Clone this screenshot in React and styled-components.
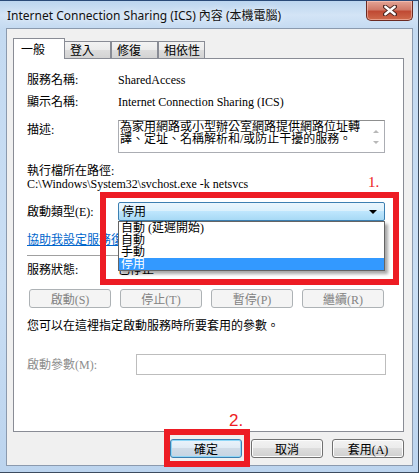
import React from 'react';
import styled, { createGlobalStyle } from 'styled-components';

const UI_FONT = `"Liberation Serif", "Noto Sans CJK TC", serif`;
const RED = '#ed1c24';

const GlobalStyle = createGlobalStyle`
  body {
    margin: 0;
    background: #ffffff;
  }
`;

const Window = styled.div`
  position: relative;
  width: 419px;
  height: 473px;
  box-sizing: border-box;
  border-top: 1px solid #2a4a78;
  border-right: 1px solid #3c4b5e;
  border-bottom: 1px solid #3c4b5e;
  background: linear-gradient(180deg, #bcd5ef 0px, #d3e4f6 14px, #c4daf1 28px, #c9def4 60%, #bcd4ee 100%);
  display: flex;
  flex-direction: column;
  font-family: ${UI_FONT};
  font-size: 12px;
  color: #000;
`;

const TitleBar = styled.div`
  height: 27px;
  display: flex;
  align-items: flex-start;
`;

const Title = styled.div`
  padding: 7px 0 0 7px;
  font-family: "Noto Sans", "Noto Sans CJK TC", sans-serif;
  font-size: 12px;
  line-height: 16px;
  color: #111;
  text-shadow: 0 0 6px rgba(255, 255, 255, 0.9);
`;

const CloseButton = styled.div`
  margin-left: auto;
  margin-right: 5px;
  width: 47px;
  height: 20px;
  box-sizing: border-box;
  border: 1px solid #6b2a22;
  border-top: none;
  border-radius: 0 0 5px 5px;
  background: linear-gradient(180deg, #e3a496 0%, #d07a69 45%, #c04a34 55%, #cf6a4c 100%);
  box-shadow: inset 0 0 0 1px rgba(255, 210, 200, 0.5);
  display: flex;
  align-items: center;
  justify-content: center;
`;

const Client = styled.div`
  margin: 0 5px 6px 6px;
  height: 438px;
  box-sizing: border-box;
  border: 1px solid #8b9aae;
  background: #f0f0f0;
  padding: 9px 8px 0 6px;
  display: flex;
  flex-direction: column;
`;

const TabStrip = styled.div`
  height: 20px;
  display: flex;
  align-items: flex-end;
  position: relative;
  z-index: 1;
`;

const Tab = styled.div`
  box-sizing: border-box;
  height: ${p => (p.$active ? 21 : 17)}px;
  min-width: ${p => (p.$active ? 52 : 47)}px;
  margin-bottom: ${p => (p.$active ? -1 : 0)}px;
  margin-right: ${p => (p.$active ? -1 : 0)}px;
  position: relative;
  z-index: ${p => (p.$active ? 2 : 1)};
  padding: ${p => (p.$active ? '4px 0 0 7px' : '2px 0 0 5px')};
  border: 1px solid #898c95;
  border-bottom: none;
  background: ${p =>
    p.$active ? '#ffffff' : 'linear-gradient(180deg, #f3f3f3 0%, #ebebeb 50%, #dddddd 50%, #d3d3d3 100%)'};
  line-height: 14px;
  font-size: 12px;
`;

const Panel = styled.div`
  height: 374px;
  box-sizing: border-box;
  border: 1px solid #898c95;
  background: #ffffff;
  padding-left: 13px;
  display: flex;
  flex-direction: column;
`;

const Row = styled.div`
  display: flex;
  align-items: ${p => p.$align || 'center'};
  height: ${p => p.$h}px;
  margin-top: ${p => p.$mt}px;
  line-height: 14px;
  flex-shrink: 0;
`;

const Label = styled.div`
  width: ${p => p.$w || 91}px;
  flex-shrink: 0;
  padding-top: ${p => p.$pt || 0}px;
  color: ${p => (p.$muted ? '#8d8d8d' : '#000')};
`;

const DescBox = styled.div`
  width: 267px;
  height: 33px;
  box-sizing: border-box;
  border: 1px solid #abadb3;
  border-top-color: #8e8f8f;
  display: flex;
`;

const DescText = styled.div`
  flex: 1;
  padding: 0 0 0 1px;
  line-height: 12px;
  font-size: 12px;
`;

const ScrollColumn = styled.div`
  width: 16px;
  display: flex;
  flex-direction: column;
  align-items: center;
  justify-content: space-between;
  padding: 9px 0 8px;
  box-sizing: border-box;
`;

const ScrollArrow = styled.div`
  width: 0;
  height: 0;
  border-left: 3px solid transparent;
  border-right: 3px solid transparent;
  ${p => (p.$down ? 'border-top: 3px solid #b8b8b8;' : 'border-bottom: 3px solid #b8b8b8;')}
`;

const PathBlock = styled.div`
  margin-top: 12px;
  line-height: 13px;
`;

const Combo = styled.div`
  position: relative;
  width: 267px;
  height: 19px;
  box-sizing: border-box;
  border: 1px solid #3c7fb1;
  border-radius: 2px;
  background: linear-gradient(180deg, #eaf6fd 0%, #d9f0fc 50%, #bee6fd 50%, #a7d9f5 100%);
  display: flex;
  align-items: center;
  padding: 0 7px 0 3px;
  font-size: 12px;
`;

const ComboArrow = styled.div`
  margin-left: auto;
  width: 0;
  height: 0;
  border-left: 4px solid transparent;
  border-right: 4px solid transparent;
  border-top: 4px solid #000;
`;

const DropList = styled.div`
  position: absolute;
  top: 18px;
  left: -1px;
  width: 267px;
  box-sizing: border-box;
  border: 1px solid #646464;
  background: #ffffff;
  box-shadow: 3px 3px 3px rgba(0, 0, 0, 0.35);
  z-index: 3;
`;

const DropItem = styled.div`
  height: 12px;
  line-height: 12px;
  padding-left: 2px;
  font-size: 12px;
  background: ${p => (p.$selected ? '#3399ff' : 'transparent')};
  color: ${p => (p.$selected ? '#ffffff' : '#000')};
`;

const HelpLink = styled.div`
  margin-top: 12px;
  height: 14px;
  line-height: 14px;
  color: #0066cc;
  text-decoration: underline;
`;

const Separator = styled.div`
  margin-top: 8px;
  width: 358px;
  height: 1px;
  background: #a0a0a0;
  border-bottom: 1px solid #ffffff;
`;

const ServiceButtons = styled.div`
  margin: 12px 0 0 2px;
  width: 355px;
  display: grid;
  grid-template-columns: repeat(4, 1fr);
  column-gap: 9px;
`;

const DisabledButton = styled.div`
  height: 19px;
  box-sizing: border-box;
  border: 1px solid #adb2b5;
  border-radius: 3px;
  background: #f4f4f4;
  color: #838383;
  display: flex;
  align-items: center;
  justify-content: center;
  font-size: 12px;
`;

const Note = styled.div`
  margin-top: 11px;
  line-height: 14px;
`;

const ParamInput = styled.div`
  width: 250px;
  height: 21px;
  box-sizing: border-box;
  border: 1px solid #bdbdbd;
  background: #ffffff;
`;

const DialogButtons = styled.div`
  margin-top: 7px;
  display: flex;
  justify-content: flex-end;
  gap: 9px;
`;

const DialogButton = styled.div`
  width: 72px;
  height: 19px;
  box-sizing: border-box;
  border: 1px solid ${p => (p.$default ? '#3c7fb1' : '#707070')};
  border-radius: 3px;
  background: ${p =>
    p.$default
      ? 'linear-gradient(180deg, #eaf3fb 0%, #dfeaf4 50%, #cfdbe7 50%, #c6d4e2 100%)'
      : 'linear-gradient(180deg, #f2f2f2 0%, #ebebeb 50%, #dddddd 50%, #cfcfcf 100%)'};
  box-shadow: ${p => (p.$default ? 'inset 0 0 0 1px #8fd7f7' : 'inset 0 0 0 1px #fcfcfc')};
  display: flex;
  align-items: center;
  justify-content: center;
  font-size: 12px;
`;

const Callout = styled.div`
  position: absolute;
  left: ${p => p.$x}px;
  top: ${p => p.$y}px;
  width: ${p => p.$w}px;
  height: ${p => p.$h}px;
  box-sizing: border-box;
  border: ${p => p.$t}px solid ${RED};
  z-index: 5;
`;

const StepNumber = styled.div`
  position: absolute;
  left: ${p => p.$x}px;
  top: ${p => p.$y}px;
  color: ${RED};
  font-family: ${p => (p.$serif ? '"Liberation Serif", serif' : '"Liberation Sans", sans-serif')};
  font-size: ${p => p.$size}px;
  line-height: ${p => p.$size}px;
  z-index: 5;
`;

const CloseGlyph = () => (
  <svg width="14" height="11" viewBox="0 0 14 11">
    <path d="M2 1.5 L12 9.5 M12 1.5 L2 9.5" stroke="#4a2520" strokeWidth="4.2" strokeLinecap="round" />
    <path d="M2.3 1.8 L11.7 9.2 M11.7 1.8 L2.3 9.2" stroke="#ffffff" strokeWidth="2.4" strokeLinecap="round" />
  </svg>
);

const startupOptions = ['自動 (延遲開始)', '自動', '手動', '停用'];
const serviceActions = ['啟動(S)', '停止(T)', '暫停(P)', '繼續(R)'];

export default function App() {
  return (
    <>
      <GlobalStyle />
      <Window>
        <TitleBar>
          <Title>Internet Connection Sharing (ICS) 內容 (本機電腦)</Title>
          <CloseButton>
            <CloseGlyph />
          </CloseButton>
        </TitleBar>

        <Client>
          <TabStrip>
            <Tab $active>一般</Tab>
            <Tab>登入</Tab>
            <Tab>修復</Tab>
            <Tab>相依性</Tab>
          </TabStrip>

          <Panel>
            <Row $h={16} $mt={13}>
              <Label>服務名稱:</Label>
              <div>SharedAccess</div>
            </Row>
            <Row $h={16} $mt={6}>
              <Label>顯示名稱:</Label>
              <div>Internet Connection Sharing (ICS)</div>
            </Row>
            <Row $h={33} $mt={10} $align="flex-start">
              <Label $pt={3}>描述:</Label>
              <DescBox>
                <DescText>
                  為家用網路或小型辦公室網路提供網路位址轉
                  <br />
                  譯、定址、名稱解析和/或防止干擾的服務。
                </DescText>
                <ScrollColumn>
                  <ScrollArrow />
                  <ScrollArrow $down />
                </ScrollColumn>
              </DescBox>
            </Row>

            <PathBlock>
              執行檔所在路徑:
              <br />
              C:\Windows\System32\svchost.exe -k netsvcs
            </PathBlock>

            <Row $h={19} $mt={11}>
              <Label>啟動類型(E):</Label>
              <Combo>
                停用
                <ComboArrow />
                <DropList>
                  {startupOptions.map(opt => (
                    <DropItem key={opt} $selected={opt === '停用'}>
                      {opt}
                    </DropItem>
                  ))}
                </DropList>
              </Combo>
            </Row>

            <HelpLink>協助我設定服務復原選項。</HelpLink>
            <Separator />

            <Row $h={14} $mt={6}>
              <Label>服務狀態:</Label>
              <div>已停止</div>
            </Row>

            <ServiceButtons>
              {serviceActions.map(a => (
                <DisabledButton key={a}>{a}</DisabledButton>
              ))}
            </ServiceButtons>

            <Note>您可以在這裡指定啟動服務時所要套用的參數。</Note>

            <Row $h={21} $mt={21}>
              <Label $w={109} $muted>
                啟動參數(M):
              </Label>
              <ParamInput />
            </Row>
          </Panel>

          <DialogButtons>
            <DialogButton $default>確定</DialogButton>
            <DialogButton>取消</DialogButton>
            <DialogButton>套用(A)</DialogButton>
          </DialogButtons>
        </Client>

        <Callout $x={100} $y={191} $w={299} $h={93} $t={6} />
        <StepNumber $x={368} $y={174} $size={15} $serif>
          1.
        </StepNumber>
        <Callout $x={164} $y={428} $w={86} $h={38} $t={6} />
        <StepNumber $x={229} $y={411} $size={17}>
          2.
        </StepNumber>
      </Window>
    </>
  );
}
